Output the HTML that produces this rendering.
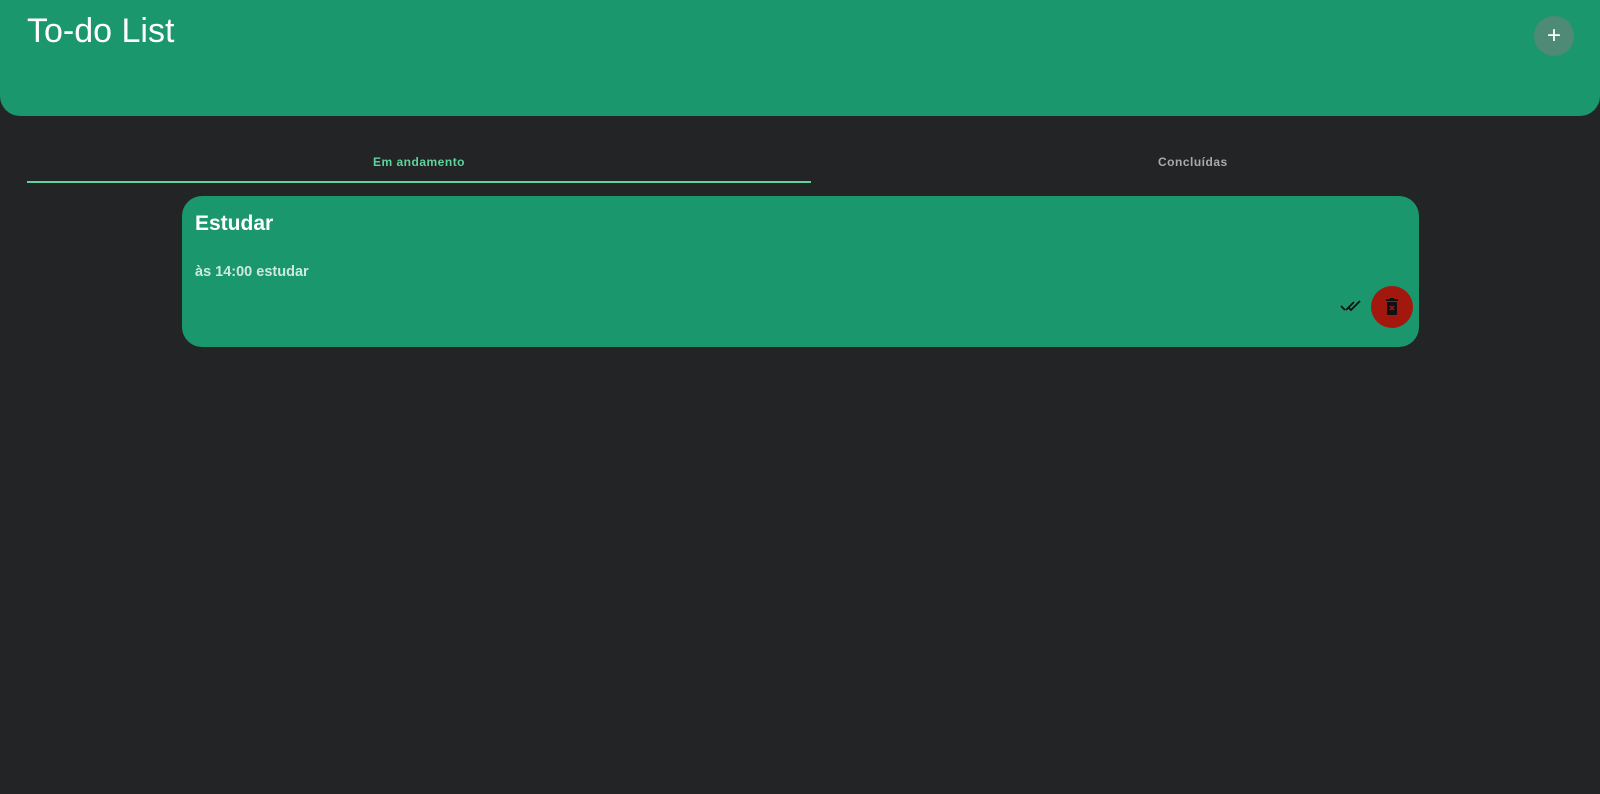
<!DOCTYPE html>
<html><head><meta charset="utf-8"><style>
html,body{margin:0;padding:0;width:1600px;height:794px;background:#232426;overflow:hidden;font-family:"Liberation Sans",sans-serif}
.hdr{position:absolute;left:0;top:0;width:1600px;height:116px;background:#1b976d;border-radius:0 0 20px 20px}
.title{position:absolute;left:27px;top:12px;color:#fff;font-size:34px;font-family:"Liberation Sans",sans-serif;font-weight:normal}
.add{position:absolute;left:1534px;top:16px;width:40px;height:40px;border-radius:50%;background:#4f8a76;color:#fff;font-size:24px;line-height:40px;text-align:center}
.tab{position:absolute;top:155px;font-size:12px;font-weight:bold;letter-spacing:0.5px}
.line{position:absolute;left:27px;top:181px;width:784px;height:2px;background:#5fd39b}
.card{position:absolute;left:182px;top:196px;width:1237px;height:151px;background:#1b976d;border-radius:20px}
.ct{position:absolute;left:13px;top:16px;color:#fff;font-size:21px;font-weight:bold}
.cd{position:absolute;left:13px;top:68px;color:#cdeadc;font-size:14.5px;font-weight:bold}
.del{position:absolute;left:1189px;top:90px;width:42px;height:42px;border-radius:50%;background:#a3180e}
</style></head><body>
<div class="hdr"><div class="title">To-do List</div><div class="add">+</div></div>
<div class="tab" style="left:373px;color:#5fd39b">Em andamento</div>
<div class="tab" style="left:1158px;color:#aaa">Concluídas</div>
<div class="line"></div>
<div class="card"><div class="ct">Estudar</div><div class="cd">às 14:00 estudar</div>
<svg style="position:absolute;left:1158px;top:103px" width="22" height="14" viewBox="0 0 22 14"><path d="M1 7l4 4M6 11l8-8M9 9l2 2 9-9" stroke="#111" stroke-width="1.8" fill="none"/></svg>
<div class="del"><svg style="position:absolute;left:14px;top:12px" width="14" height="18" viewBox="0 0 14 18"><rect x="1" y="1" width="12" height="2" fill="#111"/><rect x="5" y="0" width="4" height="2" fill="#111"/><rect x="2" y="4" width="10" height="13" rx="1" fill="#111"/><path d="M5 8l4 4M9 8l-4 4" stroke="#a3180e" stroke-width="1.5"/></svg></div>
</div>
</body></html>
